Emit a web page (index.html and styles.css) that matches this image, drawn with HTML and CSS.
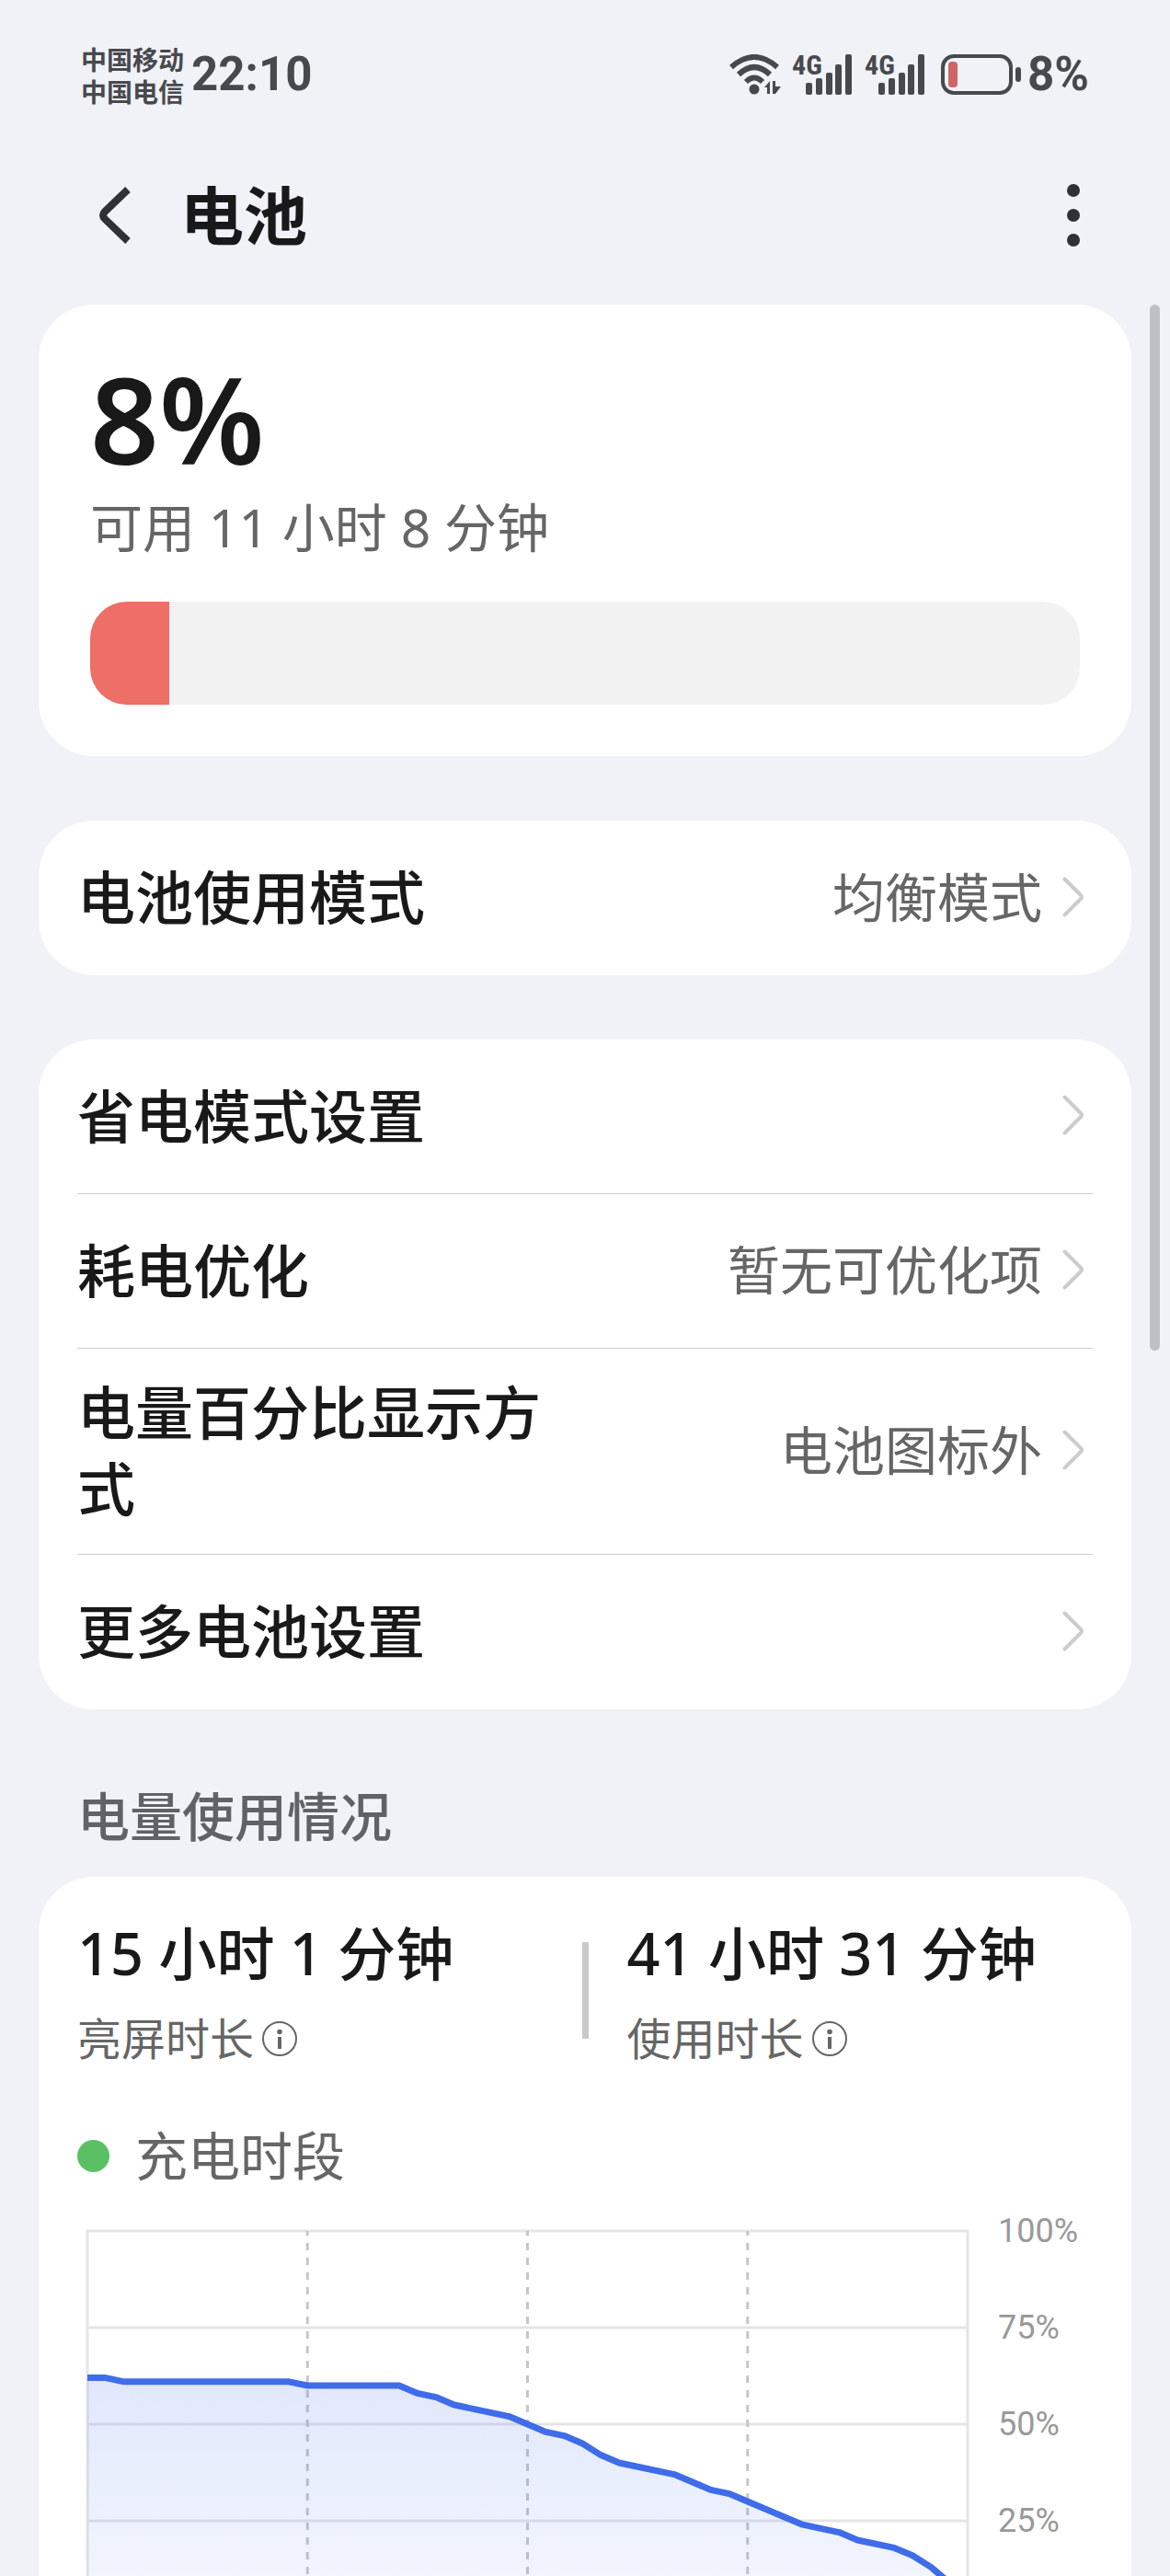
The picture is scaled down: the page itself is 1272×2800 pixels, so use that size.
FILE: index.html
```html
<!DOCTYPE html>
<html lang="zh-CN">
<head>
    <meta charset="UTF-8">
    <meta name="viewport" content="width=device-width, initial-scale=1.0">
    <title>电池</title>
    <link rel="stylesheet" href="styles.css">
</head>
<body>
    <!-- Shared icons -->
    <svg class="sprite" aria-hidden="true">
        <symbol id="chevron" viewBox="0 0 24 44">
            <path d="M2.500 2.500 L20 20 Q22 22 20 24 L2.500 41.500" fill="none" stroke="currentColor" stroke-width="4" stroke-linecap="round"/>
        </symbol>
        <symbol id="info" viewBox="0 0 38 38">
            <circle cx="19" cy="19" r="18" fill="none" stroke="currentColor" stroke-width="2"/>
            <circle cx="19" cy="11.500" r="2.800" fill="currentColor"/>
            <rect x="17" y="17" width="4" height="13" fill="currentColor"/>
        </symbol>
        <symbol id="bars" viewBox="0 0 51 44">
            <rect x="0" y="31" width="7" height="13" rx="2"/>
            <rect x="11" y="26" width="7" height="18" rx="2"/>
            <rect x="22" y="20" width="7" height="24" rx="2"/>
            <rect x="32" y="11" width="7" height="33" rx="2"/>
            <rect x="43" y="0" width="7" height="44" rx="2"/>
        </symbol>
    </svg>

    <div class="screen">
        <div class="status-bar">
            <div class="status-group">
                <div class="carriers">
                    <div>中国移动</div>
                    <div>中国电信</div>
                </div>
                <div class="status-text">22:10</div>
            </div>
            <div class="status-group">
                <svg class="wifi" viewBox="0 0 58 44" aria-label="WLAN">
                    <g fill="none" stroke="currentColor" stroke-width="6">
                        <path d="M2 14 Q27 -8 52 14"/>
                        <path d="M10 22 Q27 6 44 22"/>
                        <path d="M18 30 Q27 21 36 30"/>
                    </g>
                    <circle cx="27" cy="38" r="5.500" fill="currentColor"/>
                    <path d="M38 36 L44 29 V43 H41 V36 Z M47 29 H50 V35 H56 L50 43 H47 Z" fill="currentColor"/>
                </svg>
                <svg class="signal" viewBox="0 0 66 44" aria-label="4G">
                    <text class="signal-label" x="0" y="22">4G</text>
                    <use href="#bars" x="15" y="0" width="51" height="44"/>
                </svg>
                <svg class="signal" viewBox="0 0 66 44" aria-label="4G">
                    <text class="signal-label" x="0" y="22">4G</text>
                    <use href="#bars" x="15" y="0" width="51" height="44"/>
                </svg>
                <svg class="battery-icon" viewBox="0 0 88 44">
                    <rect x="2" y="2" width="74" height="40" rx="12" fill="none" stroke="currentColor" stroke-width="4"/>
                    <rect x="8" y="8" width="10" height="28" rx="4" fill="#cf6466"/>
                    <rect x="81" y="14" width="6" height="16" rx="3" fill="currentColor"/>
                </svg>
                <div class="status-text">8%</div>
            </div>
        </div>

        <header class="title-bar">
            <button type="button" class="back-btn" aria-label="返回">
                <svg viewBox="0 0 36 64">
                    <path d="M31 4 L6 28 Q2 32 6 36 L31 60" fill="none" stroke="currentColor" stroke-width="8"/>
                </svg>
            </button>
            <h1>电池</h1>
            <button type="button" class="menu-btn" aria-label="更多">
                <svg viewBox="0 0 14 68">
                    <circle cx="7" cy="7" r="7"/>
                    <circle cx="7" cy="34" r="7"/>
                    <circle cx="7" cy="61" r="7"/>
                </svg>
            </button>
        </header>

        <main class="content">
            <section class="card level-card">
                <div class="level">8%</div>
                <div class="remaining">可用 11 小时 8 分钟</div>
                <div class="level-bar">
                    <div class="level-fill" style="width: 8%;"></div>
                </div>
            </section>

            <nav class="card list">
                <a class="row" href="#">
                    <span class="row-title">电池使用模式</span>
                    <span class="row-value">均衡模式</span>
                    <svg class="chevron"><use href="#chevron"/></svg>
                </a>
            </nav>

            <nav class="card list">
                <a class="row" href="#">
                    <span class="row-title">省电模式设置</span>
                    <svg class="chevron"><use href="#chevron"/></svg>
                </a>
                <a class="row" href="#">
                    <span class="row-title">耗电优化</span>
                    <span class="row-value">暂无可优化项</span>
                    <svg class="chevron"><use href="#chevron"/></svg>
                </a>
                <a class="row" href="#">
                    <span class="row-title">电量百分比显示方式</span>
                    <span class="row-value">电池图标外</span>
                    <svg class="chevron"><use href="#chevron"/></svg>
                </a>
                <a class="row" href="#">
                    <span class="row-title">更多电池设置</span>
                    <svg class="chevron"><use href="#chevron"/></svg>
                </a>
            </nav>

            <h2>电量使用情况</h2>

            <section class="card usage-card">
                <div class="stats">
                    <div class="stat">
                        <div class="stat-value">15 小时 1 分钟</div>
                        <div class="stat-label">亮屏时长<svg class="info"><use href="#info"/></svg></div>
                    </div>
                    <div class="stat-divider"></div>
                    <div class="stat">
                        <div class="stat-value">41 小时 31 分钟</div>
                        <div class="stat-label">使用时长<svg class="info"><use href="#info"/></svg></div>
                    </div>
                </div>

                <div class="legend">
                    <span class="legend-dot"></span>
                    <span>充电时段</span>
                </div>

                <!-- One x unit is half an hour, one y unit is one percent -->
                <div class="chart">
                    <svg class="plot" viewBox="0 0 48 100" preserveAspectRatio="none">
                        <defs>
                            <linearGradient id="area" x1="0" y1="0" x2="0" y2="1">
                                <stop offset="0" stop-color="#3f6ce8" stop-opacity="0.16"/>
                                <stop offset="1" stop-color="#3f6ce8" stop-opacity="0.05"/>
                            </linearGradient>
                        </defs>
                        <path class="grid-line" d="M0 0 H48 V100 H0 Z M0 25 H48 M0 50 H48 M0 75 H48"/>
                        <path class="grid-dash" d="M12 0 V100 M24 0 V100 M36 0 V100"/>
                        <polygon fill="url(#area)" points="0,38 1,38 2,39 11,39 12,40 17,40 18,42 19,43 20,45 23,48 24,50 25,52 26,53 27,55 28,58 29,60 32,63 34,67 35,68 36,70 39,76 41,78 42,80 44,82 45,84 46,87 47,91 48,92 48,100 0,100"/>
                        <polyline class="level-line" points="0,38 1,38 2,39 11,39 12,40 17,40 18,42 19,43 20,45 23,48 24,50 25,52 26,53 27,55 28,58 29,60 32,63 34,67 35,68 36,70 39,76 41,78 42,80 44,82 45,84 46,87 47,91 48,92"/>
                    </svg>
                    <div class="y-axis">
                        <span>100%</span>
                        <span>75%</span>
                        <span>50%</span>
                        <span>25%</span>
                    </div>
                </div>
            </section>
        </main>
        <div class="scroll-thumb"></div>
    </div>
</body>
</html>
```
FILE: styles.css
```css
* {
    margin: 0;
    padding: 0;
    box-sizing: border-box;
}

body {
    font-family: "Noto Sans", "Noto Sans CJK SC", sans-serif;
    background: #f1f2f7;
    color: #191919;
}

svg {
    display: block;
    flex: none;
}

.sprite {
    position: absolute;
    width: 0;
    height: 0;
}

.screen {
    position: relative;
    display: flex;
    flex-direction: column;
    height: 100vh;
    overflow: hidden;
}

/* Status bar */
.status-bar {
    display: flex;
    flex: none;
    align-items: center;
    justify-content: space-between;
    height: 162px;
    padding: 0 88px;
    color: #48494d;
}

.status-group {
    display: flex;
    align-items: center;
}

.carriers {
    margin-right: 8px;
    padding-top: 4px;
    font-size: 28px;
    font-weight: 700;
    line-height: 35px;
}

.status-text {
    font-family: Roboto, sans-serif;
    font-size: 51px;
    font-weight: 700;
    line-height: 60px;
}

.wifi {
    width: 58px;
    height: 44px;
    margin-right: 10px;
}

.signal {
    width: 66px;
    height: 44px;
    margin-right: 13px;
    fill: currentColor;
    overflow: visible;
}

.signal-label {
    font-family: "Roboto Condensed", "Liberation Sans Narrow", Roboto, sans-serif;
    font-size: 30px;
    font-weight: 700;
}

.battery-icon {
    width: 88px;
    height: 44px;
    margin: 0 6px 0 4px;
}

/* Title bar */
.title-bar {
    display: flex;
    flex: none;
    align-items: center;
    height: 144px;
    margin-bottom: 25px;
    padding: 0 98px;
}

button {
    border: none;
    background: none;
    color: #2f3136;
    cursor: pointer;
}

.back-btn {
    padding: 0 52px 0 10px;
}

.back-btn svg {
    width: 36px;
    height: 64px;
}

.menu-btn {
    margin-left: auto;
}

.menu-btn svg {
    width: 14px;
    height: 68px;
    fill: currentColor;
}

h1 {
    font-size: 69px;
    font-weight: 700;
    line-height: 84px;
}

/* Cards */
.content {
    flex: 1;
    min-height: 0;
    padding: 0 42px;
    overflow-y: auto;
    scrollbar-width: none;
}

.card {
    margin-bottom: 70px;
    border-radius: 60px;
    background: #fff;
}

.level-card {
    padding: 56px;
}

.level {
    font-size: 131px;
    font-weight: 600;
    line-height: 134px;
}

.remaining {
    margin-top: 12px;
    color: #666;
    font-size: 57px;
    line-height: 80px;
}

.level-bar {
    height: 112px;
    margin-top: 41px;
    border-radius: 40px;
    background: #f2f2f2;
    overflow: hidden;
}

.level-fill {
    height: 100%;
    background: #ed6f66;
}

/* Settings list */
.list {
    padding: 0 42px;
}

.row {
    display: flex;
    align-items: center;
    min-height: 168px;
    padding: 27px 9px 30px 0;
    color: inherit;
    text-decoration: none;
}

.row:not(:last-child) {
    border-bottom: 1px solid #ccc;
}

.row-title {
    max-width: 50%;
    margin-right: auto;
    font-size: 63px;
    font-weight: 500;
    line-height: 83px;
}

.row-value {
    margin-right: 22px;
    color: #666;
    font-size: 57px;
    line-height: 80px;
}

.chevron {
    width: 24px;
    height: 44px;
    color: #ccc;
}

h2 {
    margin: 76px 42px 26px;
    color: #606268;
    font-size: 57px;
    font-weight: 500;
    line-height: 80px;
}

/* Usage */
.usage-card {
    padding: 41px 42px 60px;
}

.stats {
    display: grid;
    grid-template-columns: 1fr 7px 1fr;
    align-items: center;
}

.stat:last-child {
    padding-left: 42px;
}

.stat-value {
    font-size: 63px;
    font-weight: 500;
    line-height: 84px;
    white-space: nowrap;
}

.stat-label {
    display: flex;
    align-items: center;
    gap: 9px;
    margin-top: 21px;
    color: #666;
    font-size: 48px;
    line-height: 60px;
}

.info {
    width: 38px;
    height: 38px;
}

.stat-divider {
    height: 105px;
    background: #c9c9c9;
}

.legend {
    display: flex;
    align-items: center;
    gap: 28px;
    margin-top: 57px;
    color: #666;
    font-size: 57px;
    line-height: 80px;
}

.legend-dot {
    width: 35px;
    height: 35px;
    border-radius: 50%;
    background: #5bc063;
}

.chart {
    display: flex;
    align-items: flex-start;
    gap: 33px;
    margin-top: 21px;
    padding-left: 11px;
}

.plot {
    flex: 1;
    min-width: 0;
    height: 420px;
    margin-top: 21px;
    overflow: visible;
}

.plot path,
.plot polyline {
    fill: none;
    vector-effect: non-scaling-stroke;
}

.grid-line {
    stroke: #e5e5e5;
    stroke-width: 3px;
}

.grid-dash {
    stroke: #c6c6ca;
    stroke-width: 3px;
    stroke-dasharray: 8px 8px;
    stroke-dashoffset: 3px;
}

.level-line {
    stroke: #3f6ce8;
    stroke-width: 7px;
    stroke-linejoin: round;
}

.y-axis {
    display: grid;
    grid-auto-rows: 105px;
    width: 103px;
    color: #999;
    font-family: Roboto, sans-serif;
    font-size: 36px;
    line-height: 42px;
}

/* Overlay scroll indicator */
.scroll-thumb {
    position: absolute;
    top: 331px;
    right: 11px;
    width: 11px;
    height: 1137px;
    border-radius: 6px;
    background: #bfc0c6;
}
```
